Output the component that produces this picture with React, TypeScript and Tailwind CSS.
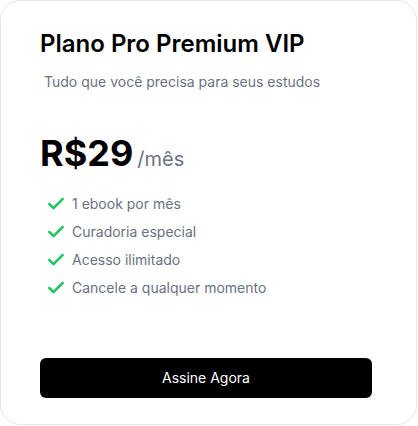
import React from "react";

const features = [
  "1 ebook por mês",
  "Curadoria especial",
  "Acesso ilimitado",
  "Cancele a qualquer momento",
];

function Check() {
  return (
    <svg width="20" height="20" viewBox="0 0 24 24" fill="none" stroke="#22c55e" strokeWidth="3" strokeLinecap="round" strokeLinejoin="round">
      <path d="M20 6 9 17l-5-5" />
    </svg>
  );
}

export default function App() {
  return (
    <div className="w-[418px] h-[426px] bg-white" style={{ fontFamily: "Inter, 'Noto Sans', sans-serif" }}>
      <div className="w-[417px] h-[425px] border border-gray-200 rounded-[20px] bg-white flex flex-col pl-[39px] pt-[27px]">
        <h1 className="text-2xl leading-8 font-semibold text-black">Plano Pro Premium VIP</h1>
        <p className="mt-[12px] ml-1 text-sm leading-5 text-gray-500">Tudo que você precisa para seus estudos</p>
        <div className="mt-[41px] flex items-baseline">
          <span className="text-4xl leading-10 font-bold text-black">R$29</span>
          <span className="ml-1 text-xl text-gray-500">/mês</span>
        </div>
        <ul className="mt-[21px] ml-[6px] flex flex-col gap-2">
          {features.map((f) => (
            <li key={f} className="flex items-center gap-[6px] text-sm leading-5 text-gray-500">
              <Check />
              <span>{f}</span>
            </li>
          ))}
        </ul>
        <button className="mt-[60px] w-[332px] h-10 bg-black text-white text-sm rounded-md">Assine Agora</button>
      </div>
    </div>
  );
}
